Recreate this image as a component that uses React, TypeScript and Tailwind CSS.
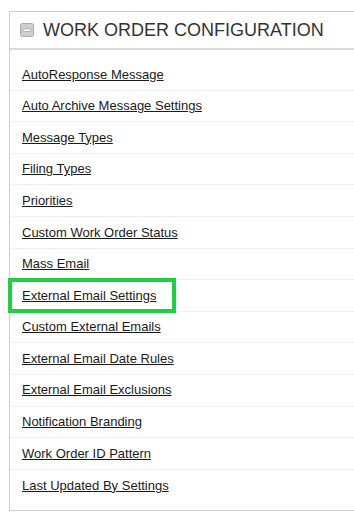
const links = [
  'AutoResponse Message',
  'Auto Archive Message Settings',
  'Message Types',
  'Filing Types',
  'Priorities',
  'Custom Work Order Status',
  'Mass Email',
  'External Email Settings',
  'Custom External Emails',
  'External Email Date Rules',
  'External Email Exclusions',
  'Notification Branding',
  'Work Order ID Pattern',
  'Last Updated By Settings',
];

const CollapseIcon = () => (
  <svg width="14" height="14" viewBox="0 0 14 14" className="shrink-0">
    <rect x="0.5" y="0.5" width="13" height="13" rx="2" fill="#cfcfcf" stroke="#a9a9a9" />
    <rect x="3" y="6" width="8" height="2.2" fill="#ffffff" stroke="#9a9a9a" strokeWidth="0.6" />
  </svg>
);

export default function App() {
  return (
    <div className="min-h-[518px] bg-white pt-[11px] pl-[9px] font-['Liberation_Sans',Arial,sans-serif]">
      <div className="border border-r-0 border-[#cccccc]">
        <div className="flex h-[38px] items-center gap-[9px] border-b-2 border-[#d9d9d9] pl-[10px]">
          <CollapseIcon />
          <h2 className="text-[18px] uppercase text-[#333333] whitespace-nowrap">Work Order Configuration</h2>
        </div>
        <ul className="py-[9px]">
          {links.map((label, i) => (
            <li
              key={label}
              className={`flex h-[31.6px] items-center pl-[12px] ${i < links.length - 1 ? 'border-b border-[#efefef]' : ''}`}
            >
              {label === 'External Email Settings' ? (
                <a
                  href="#"
                  className="-ml-[14px] border-[4px] border-[#1ccf43] pl-[10px] pr-[16px] py-[3.5px] text-[13px] text-[#1a1a1a] underline"
                >
                  {label}
                </a>
              ) : (
                <a href="#" className="text-[13px] text-[#1a1a1a] underline">
                  {label}
                </a>
              )}
            </li>
          ))}
        </ul>
      </div>
    </div>
  );
}
